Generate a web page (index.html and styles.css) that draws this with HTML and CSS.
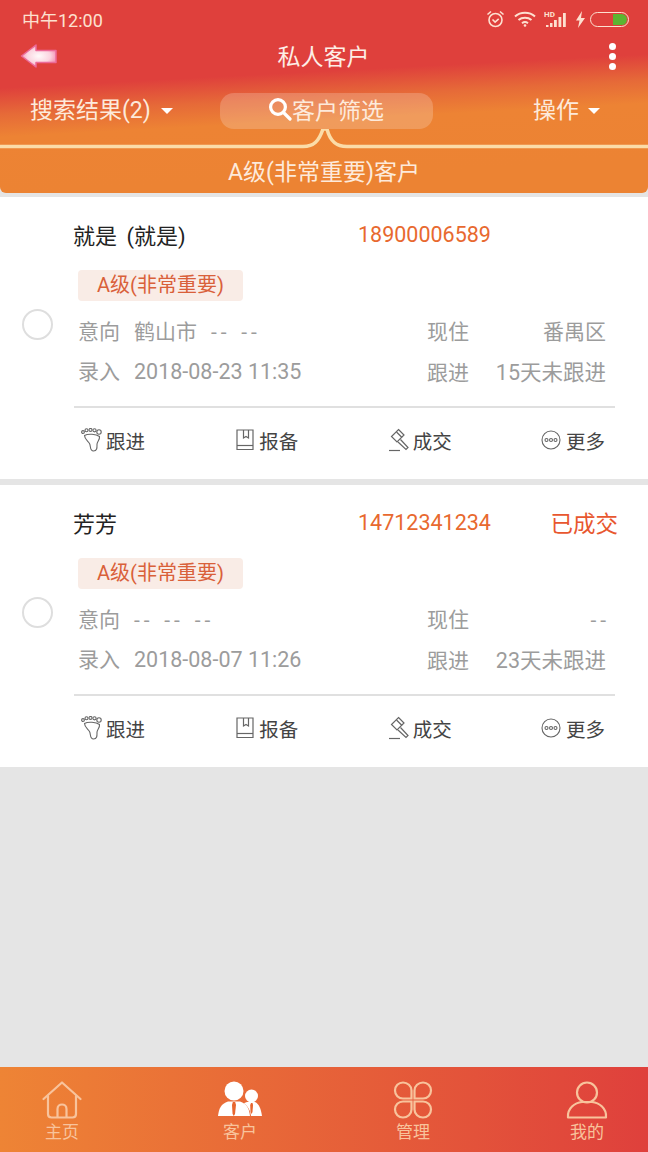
FILE: index.html
```html
<!DOCTYPE html>
<html lang="zh-CN">
<head>
  <meta charset="UTF-8">
  <title>私人客户</title>
  <link rel="stylesheet" href="styles.css">
</head>
<body>

<div class="header">
  <div class="status-bar">
    <span>中午12:00</span>
    <div class="status-icons">
      <svg width="19" height="18" viewBox="0 0 19 18" fill="none" stroke="#fde0d0" stroke-width="1.600"><circle cx="9.500" cy="10" r="6.500"/><path d="M6.500 9.500l2.600 2.600 3.600-3.200"/><path d="M1.500 4.500L5 1.500M17.500 4.500L14 1.500"/></svg>
      <svg class="wifi" width="22" height="16" viewBox="0 0 22 16" fill="none" stroke="#fde0d0" stroke-width="2"><path d="M1 5.500C6.500.5 15.500.5 21 5.500"/><path d="M4.500 9C8 6 14 6 17.500 9"/><path d="M8 12.200c1.800-1.400 4.200-1.400 6 0"/><circle cx="11" cy="14.500" r="1.300" fill="#fde0d0" stroke="none"/></svg>
      <svg class="signal" width="23" height="18" viewBox="0 0 23 18" fill="#fde0d0"><text x="0" y="7" font-size="8" font-weight="700" font-family="Roboto">HD</text><path d="M2 15h2.500v2H2zM6 13h2.500v4H6zM10 10h2.800v7H10zM14.500 7h2.800v10h-2.800zM19 3h2.800v14H19z"/></svg>
      <svg class="bolt" width="11" height="17" viewBox="0 0 11 17" fill="#fde0d0"><path d="M7 0L1 9.500h3.500L3 17l7-10H6z"/></svg>
      <div class="battery"><div class="battery-level"></div></div>
    </div>
  </div>

  <div class="title-bar">
    <svg class="back" width="38" height="26" viewBox="0 0 38 26">
      <defs>
        <radialGradient id="backFill" cx="0.5" cy="0.5" r="0.55">
          <stop offset="0" stop-color="#fffafa"/>
          <stop offset="0.6" stop-color="#fbd5e0"/>
          <stop offset="1" stop-color="#f38bb0"/>
        </radialGradient>
      </defs>
      <path d="M1.500 13L16 2v5.500h20v12H16V24z" fill="url(#backFill)" stroke="#ec6a98" stroke-width="1.500" stroke-linejoin="round"/>
    </svg>
    <span class="page-title">私人客户</span>
    <div class="menu-dots"><i></i><i></i><i></i></div>
  </div>

  <div class="filter-row">
    <div class="filter-left">搜索结果(2)<span class="caret"></span></div>
    <div class="filter-pill">
      <svg width="24" height="24" viewBox="0 0 24 24" fill="none" stroke="#fff" stroke-width="3.200"><circle cx="10" cy="10" r="7.400"/><path d="M15.500 15.500L22 22" stroke-linecap="round"/></svg>
      <span>客户筛选</span>
    </div>
    <div class="filter-right">操作<span class="caret"></span></div>
  </div>

  <svg class="curve" width="648" height="20" viewBox="0 0 648 20" fill="none">
    <path d="M0 17.500H303C314 17.500 319 12 323 0C326 0 326 0 327 0C330 12 336 17.500 347 17.500H648" stroke="#fbdca8" stroke-width="3.500"/>
  </svg>

  <div class="level-bar">A级(非常重要)客户</div>
</div>

<div class="customer-list">
  <div class="card">
    <div class="radio-col"><div class="radio"></div></div>
    <div class="card-main">
      <div class="name-row">
        <span class="name">就是 (就是)</span>
        <span class="phone">18900006589</span>
      </div>
      <div class="tag">A级(非常重要)</div>
      <div class="info-row">
        <div class="info-left"><span class="info-label">意向</span><span>鹤山市<span class="dashes dashes-after">-- --</span></span></div>
        <div class="info-right"><span>现住</span><span>番禺区</span></div>
      </div>
      <div class="info-row">
        <div class="info-left"><span class="info-label">录入</span><span class="date">2018-08-23 11:35</span></div>
        <div class="info-right"><span>跟进</span><span class="date">15天未跟进</span></div>
      </div>
      <div class="actions">
        <div class="action">
          <svg width="21" height="24" viewBox="0 0 21 24" fill="none" stroke="#666" stroke-width="1.100"><circle cx="2" cy="4" r="1.400"/><circle cx="5.500" cy="2.300" r="1.500"/><circle cx="9.500" cy="1.900" r="1.500"/><circle cx="13.500" cy="2.300" r="1.600"/><circle cx="18" cy="4" r="2.200"/><path d="M3.500 7.500C7 5.500 15 6 18.500 8.500C19 11.500 16.500 13 16 16C16 19 16.500 23 12.500 23C8.500 23 10 18 8.500 15.500C7 13 3.500 11 3.500 7.500Z"/></svg>
          <span>跟进</span>
        </div>
        <div class="action action-book">
          <svg width="18" height="22" viewBox="0 0 18 22" fill="none" stroke="#666" stroke-width="1.200"><path d="M1 1h16v19.500H1z"/><path d="M1 16.500h16"/><path d="M7.500 1v8l2.500-1.500L12.500 9V1"/></svg>
          <span>报备</span>
        </div>
        <div class="action">
          <svg width="21" height="24" viewBox="0 0 21 24" fill="none" stroke="#666" stroke-width="1.200"><path d="M10.500 1.500l5.500 5.500-7 7-5.500-5.500z"/><path d="M8.500 4l5.500 5.500"/><path d="M12.500 11.500l7.500 8-2 2-8-7.500"/><path d="M1 22.500h11"/></svg>
          <span>成交</span>
        </div>
        <div class="action">
          <svg width="20" height="20" viewBox="0 0 20 20" fill="none" stroke="#666" stroke-width="1.100"><circle cx="10" cy="10" r="9"/><circle cx="5.500" cy="10" r="1.500"/><circle cx="10" cy="10" r="1.500"/><circle cx="14.500" cy="10" r="1.500"/></svg>
          <span>更多</span>
        </div>
      </div>
    </div>
  </div>

  <div class="card">
    <div class="radio-col"><div class="radio"></div></div>
    <div class="card-main">
      <div class="name-row">
        <span class="name">芳芳</span>
        <span class="phone">14712341234</span>
        <span class="deal-state">已成交</span>
      </div>
      <div class="tag">A级(非常重要)</div>
      <div class="info-row">
        <div class="info-left"><span class="info-label">意向</span><span class="dashes">-- -- --</span></div>
        <div class="info-right"><span>现住</span><span class="dashes dashes-end">--</span></div>
      </div>
      <div class="info-row">
        <div class="info-left"><span class="info-label">录入</span><span class="date">2018-08-07 11:26</span></div>
        <div class="info-right"><span>跟进</span><span class="date">23天未跟进</span></div>
      </div>
      <div class="actions">
        <div class="action">
          <svg width="21" height="24" viewBox="0 0 21 24" fill="none" stroke="#666" stroke-width="1.100"><circle cx="2" cy="4" r="1.400"/><circle cx="5.500" cy="2.300" r="1.500"/><circle cx="9.500" cy="1.900" r="1.500"/><circle cx="13.500" cy="2.300" r="1.600"/><circle cx="18" cy="4" r="2.200"/><path d="M3.500 7.500C7 5.500 15 6 18.500 8.500C19 11.500 16.500 13 16 16C16 19 16.500 23 12.500 23C8.500 23 10 18 8.500 15.500C7 13 3.500 11 3.500 7.500Z"/></svg>
          <span>跟进</span>
        </div>
        <div class="action action-book">
          <svg width="18" height="22" viewBox="0 0 18 22" fill="none" stroke="#666" stroke-width="1.200"><path d="M1 1h16v19.500H1z"/><path d="M1 16.500h16"/><path d="M7.500 1v8l2.500-1.500L12.500 9V1"/></svg>
          <span>报备</span>
        </div>
        <div class="action">
          <svg width="21" height="24" viewBox="0 0 21 24" fill="none" stroke="#666" stroke-width="1.200"><path d="M10.500 1.500l5.500 5.500-7 7-5.500-5.500z"/><path d="M8.500 4l5.500 5.500"/><path d="M12.500 11.500l7.500 8-2 2-8-7.500"/><path d="M1 22.500h11"/></svg>
          <span>成交</span>
        </div>
        <div class="action">
          <svg width="20" height="20" viewBox="0 0 20 20" fill="none" stroke="#666" stroke-width="1.100"><circle cx="10" cy="10" r="9"/><circle cx="5.500" cy="10" r="1.500"/><circle cx="10" cy="10" r="1.500"/><circle cx="14.500" cy="10" r="1.500"/></svg>
          <span>更多</span>
        </div>
      </div>
    </div>
  </div>
</div>

<div class="tabbar">
  <div class="tab">
    <svg width="40" height="38" viewBox="0 0 40 38" fill="none" stroke="#f8c39c" stroke-width="2.200" stroke-linecap="round" stroke-linejoin="round"><path d="M1.500 18L20 1.500 38.500 18"/><path d="M6 15v18c0 2 1.500 3.500 3.500 3.500h21c2 0 3.500-1.500 3.500-3.500V15"/><path d="M15.500 36v-8c0-6 9-6 9 0v8"/></svg>
    <span>主页</span>
  </div>
  <div class="tab">
    <svg width="44" height="38" viewBox="0 0 44 38">
      <circle cx="16" cy="10" r="9.500" fill="#fff"/>
      <circle cx="33.500" cy="15" r="6.500" fill="#fff"/>
      <path d="M0 35c1-8 3-12 10-14.500h12c7 2.500 9 6.500 10 14.500z" fill="#fff"/>
      <path d="M26 22.500c1-1 2.500-1.500 4-1.500h7c4 2 6 6.500 7 14H33c-.5-5-3-10-7-12.500z" fill="#fff"/>
      <path d="M14.800 21h2.400l.8 3-1 9-1.200 2-1.200-2-.6-9z" fill="#e8662f"/>
      <path d="M33 22h1.500l.5 2-.5 7-1 2-1-2-.3-7z" fill="#e8662f"/>
    </svg>
    <span>客户</span>
  </div>
  <div class="tab">
    <svg width="40" height="38" viewBox="0 0 40 38" fill="none" stroke="#f8c39c" stroke-width="2.200"><path d="M18.500 17.500H10C5.500 17.500 2 14 2 9.500S5.500 1.500 10 1.500 18.500 5 18.500 9.500z"/><path d="M21.500 17.500H30c4.500 0 8-3.500 8-8s-3.500-8-8-8-8.500 3.500-8.500 8z"/><path d="M18.500 20.500H10c-4.500 0-8 3.500-8 8s3.500 8 8 8 8.500-3.500 8.500-8z"/><path d="M21.500 20.500H30c4.500 0 8 3.500 8 8s-3.500 8-8 8-8.500-3.500-8.500-8z"/></svg>
    <span>管理</span>
  </div>
  <div class="tab">
    <svg width="42" height="38" viewBox="0 0 42 38" fill="none" stroke="#f8c39c" stroke-width="2.200"><circle cx="21" cy="11.500" r="10"/><path d="M2 36.500c-1-9 7-15 14-15.500h10c7 .5 15 6.500 14 15.500z" stroke-linejoin="round"/></svg>
    <span>我的</span>
  </div>
</div>

</body>
</html>
```

FILE: styles.css
```css
* {
  box-sizing: border-box;
}

body {
  margin: 0;
  height: 100vh;
  display: flex;
  flex-direction: column;
  overflow: hidden;
  background-color: #e5e5e5;
  font-family: Roboto, "Noto Sans CJK SC", sans-serif;
}

.header {
  color: #fff;
  background: linear-gradient(177deg, #df403c 0, #df403c 88px, #e66a38 114px, #ed8334 137px, #ec8333 193px);
  border-radius: 0 0 6px 6px;
}

.status-bar {
  height: 40px;
  padding: 0 19px 2px 22px;
  display: flex;
  justify-content: space-between;
  align-items: center;
  font-size: 18px;
  color: #fde0d0;
}

.status-icons {
  display: flex;
  align-items: center;
}

.wifi {
  margin-left: 9px;
}

.signal {
  margin-left: 8px;
}

.bolt {
  margin-left: 8px;
}

.battery {
  width: 39px;
  height: 15px;
  margin-left: 4px;
  padding: 1px;
  display: flex;
  justify-content: flex-end;
  border: 1px solid #fde0d0;
  border-radius: 8px;
}

.battery-level {
  width: 14px;
  background-color: #5cb531;
  border-radius: 0 6px 6px 0;
}

.title-bar {
  height: 32px;
  padding: 0 32px 0 20px;
  display: flex;
  justify-content: space-between;
  align-items: center;
}

.page-title {
  margin: 0 20px 2px 0;
  font-size: 23px;
  color: #fdeee6;
}

.menu-dots {
  display: flex;
  flex-direction: column;
  gap: 3px;
}

.menu-dots i {
  width: 7px;
  height: 7px;
  background-color: #fff;
  border-radius: 50%;
}

.filter-row {
  height: 36px;
  margin-top: 21px;
  padding: 0 48px 0 30px;
  display: flex;
  align-items: center;
  font-size: 23px;
  color: #fdeadb;
}

.filter-left {
  width: 190px;
  height: 36px;
  padding-bottom: 6px;
  display: flex;
  align-items: center;
}

.filter-right {
  height: 36px;
  margin-left: 100px;
  padding-bottom: 6px;
  display: flex;
  align-items: center;
}

.caret {
  width: 0;
  height: 0;
  margin: 6px 0 0 10px;
  border-left: 6px solid transparent;
  border-right: 6px solid transparent;
  border-top: 6px solid #fff;
}

.filter-right .caret {
  margin-left: 9px;
}

.filter-pill {
  width: 213px;
  height: 36px;
  padding: 0 0 5px 48px;
  display: flex;
  align-items: center;
  background-color: rgba(255, 255, 255, 0.2);
  border-radius: 14px;
}

.curve {
  display: block;
}

.level-bar {
  height: 44px;
  padding-bottom: 2px;
  display: flex;
  justify-content: center;
  align-items: center;
  font-size: 23px;
  color: #fdeadb;
}

.customer-list {
  flex: 1;
  padding-top: 4px;
}

.card {
  display: flex;
  margin-bottom: 6px;
  background-color: #fff;
}

.radio-col {
  width: 74px;
  padding: 112px 0 0 22px;
}

.radio {
  width: 31px;
  height: 31px;
  border: 2px solid #dedede;
  border-radius: 50%;
}

.card-main {
  width: 541px;
  padding-top: 22px;
}

.name-row {
  height: 30px;
  display: flex;
  align-items: center;
}

.name {
  width: 285px;
  margin-left: -1px;
  font-size: 22px;
  word-spacing: 4px;
  color: #222;
}

.phone {
  font-size: 21.500px;
  color: #e8692f;
}

.deal-state {
  margin-left: auto;
  margin-right: -3px;
  font-size: 22.500px;
  color: #e8572f;
}

.tag {
  width: 165px;
  height: 31px;
  margin: 21px 0 9px 4px;
  padding-bottom: 5px;
  display: flex;
  justify-content: center;
  align-items: center;
  font-size: 20px;
  color: #d9603a;
  background-color: #f9ece6;
  border-radius: 4px;
}

.info-row {
  height: 40px;
  padding: 0 9px 0 4px;
  display: flex;
  align-items: center;
  font-size: 21px;
  color: #9c9c9c;
}

.info-left {
  width: 349px;
  display: flex;
  align-items: baseline;
}

.info-label {
  width: 56px;
}

.date {
  font-size: 21.500px;
}

.dashes {
  letter-spacing: 4px;
  word-spacing: 1.500px;
}

.dashes-after {
  margin-left: 14px;
}

.dashes-end {
  margin-right: -4px;
}

.info-right {
  flex: 1;
  display: flex;
  justify-content: space-between;
  align-items: baseline;
}

.actions {
  height: 73px;
  margin-top: 16px;
  padding: 0 10px 7px 7px;
  display: flex;
  justify-content: space-between;
  align-items: center;
  border-top: 2px solid #e0e0e0;
  font-size: 19.500px;
  color: #444;
}

.action {
  width: 64px;
  display: flex;
  justify-content: space-between;
  align-items: center;
}

.action-book svg {
  margin-left: 2px;
}

.tabbar {
  height: 85px;
  padding-top: 14px;
  display: flex;
  background: linear-gradient(90deg, #ee8435, #df403c);
  font-size: 17px;
  color: #f8c39c;
}

.tab {
  width: 80px;
  display: flex;
  flex-direction: column;
  align-items: center;
}

.tab:nth-child(1) {
  margin-left: 22px;
}

.tab:nth-child(2) {
  margin-left: 98px;
}

.tab:nth-child(3) {
  margin-left: 93px;
}

.tab:nth-child(4) {
  margin-left: 94px;
}

.tab span {
  margin-top: 1px;
  line-height: 24px;
}
```
